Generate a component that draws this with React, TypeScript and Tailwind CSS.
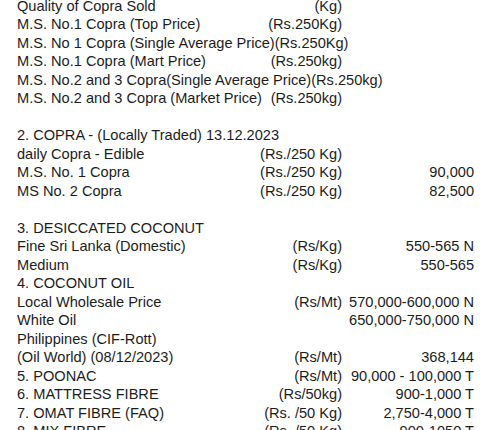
type Row = [string, string?, string?];

const rows: (Row | null)[] = [
  ['Quality of Copra Sold', '(Kg)'],
  ['M.S. No.1 Copra (Top Price)', '(Rs.250Kg)'],
  ['M.S. No 1 Copra (Single Average Price)(Rs.250Kg)'],
  ['M.S. No.1 Copra (Mart Price)', '(Rs.250kg)'],
  ['M.S. No.2 and 3 Copra(Single Average Price)(Rs.250kg)'],
  ['M.S. No.2 and 3 Copra (Market Price)', '(Rs.250kg)'],
  null,
  ['2. COPRA - (Locally Traded) 13.12.2023'],
  ['daily Copra - Edible', '(Rs./250 Kg)'],
  ['M.S. No. 1 Copra', '(Rs./250 Kg)', '90,000'],
  ['MS No. 2 Copra', '(Rs./250 Kg)', '82,500'],
  null,
  ['3. DESICCATED COCONUT'],
  ['Fine Sri Lanka (Domestic)', '(Rs/Kg)', '550-565 N'],
  ['Medium', '(Rs/Kg)', '550-565'],
  ['4. COCONUT OIL'],
  ['Local Wholesale Price', '(Rs/Mt)', '570,000-600,000 N'],
  ['White Oil', '', '650,000-750,000 N'],
  ['Philippines (CIF-Rott)'],
  ['(Oil World) (08/12/2023)', '(Rs/Mt)', '368,144'],
  ['5. POONAC', '(Rs/Mt)', '90,000 - 100,000 T'],
  ['6. MATTRESS FIBRE', '(Rs/50kg)', '900-1,000 T'],
  ['7. OMAT FIBRE (FAQ)', '(Rs. /50 Kg)', '2,750-4,000 T'],
  ['8. MIX FIBRE', '(Rs. /50 Kg)', '900-1050 T'],
];

export default function App() {
  return (
    <div className="h-[430px] overflow-hidden bg-white text-[#1c1c1c] font-['Liberation_Sans',Arial,sans-serif] text-[14.6px] leading-[18.5px]">
      <div className="mt-[-3.5px] pl-[17px] w-[474px]">
        {rows.map((r, i) =>
          r === null ? (
            <div key={i} className="h-[18.5px]" />
          ) : r.length === 1 ? (
            <div key={i} className="whitespace-nowrap">{r[0]}</div>
          ) : (
            <div key={i} className="grid grid-cols-[1fr_132px] whitespace-nowrap">
              <div className="flex justify-between">
                <span>{r[0]}</span>
                <span>{r[1]}</span>
              </div>
              <div className="text-right">{r[2]}</div>
            </div>
          )
        )}
      </div>
    </div>
  );
}
